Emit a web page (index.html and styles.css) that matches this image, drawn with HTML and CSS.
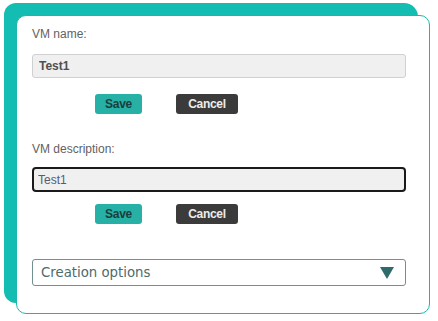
FILE: index.html
```html
<!DOCTYPE html>
<html lang="en">
<head>
    <meta charset="UTF-8">
    <title>VM settings</title>
    <link rel="stylesheet" href="styles.css">
</head>
<body>
    <div class="backdrop">
        <div class="card">
            <label class="field-label">VM name:</label>
            <input type="text" class="field name-field" value="Test1">
            <div class="actions first-actions">
                <button class="btn save">Save</button>
                <button class="btn cancel">Cancel</button>
            </div>

            <label class="field-label desc-label">VM description:</label>
            <input type="text" class="field desc-field" value="Test1">
            <div class="actions second-actions">
                <button class="btn save">Save</button>
                <button class="btn cancel">Cancel</button>
            </div>

            <div class="select-box">
                <span>Creation options</span>
                <svg class="arrow" width="14" height="12" viewBox="0 0 14 12">
                    <polygon points="0,0 14,0 7,12" fill="#2e6b6a"/>
                </svg>
            </div>
        </div>
    </div>
</body>
</html>
```

FILE: styles.css
```css
* {
    box-sizing: border-box;
    margin: 0;
    padding: 0;
}

html, body {
    height: 100%;
}

body {
    background: #ffffff;
    font-family: 'Liberation Sans', Arial, sans-serif;
    padding: 3px 0 0 4px;
}

.backdrop {
    width: 414px;
    height: 300px;
    padding: 12px 0 0 12px;
    background: #13bdb1;
    border-radius: 12px 14px 4px 12px;
}

.card {
    width: 414px;
    height: 299px;
    background: #ffffff;
    border: 1px solid #1ab7ac;
    border-radius: 10px;
    padding: 11px 0 0 15px;
    display: flex;
    flex-direction: column;
    align-items: flex-start;
}

.field-label {
    font-size: 12px;
    line-height: 14px;
    color: #626262;
}

.field {
    width: 374px;
    background: #f0f0f0;
    font-family: 'Liberation Sans', Arial, sans-serif;
    font-size: 12px;
    outline: none;
}

.name-field {
    height: 24px;
    margin-top: 13px;
    border: 1px solid #d0d0d0;
    border-radius: 3px;
    padding: 0 6px;
    color: #4f4f4f;
    font-weight: bold;
}

.desc-field {
    height: 25px;
    margin-top: 11px;
    border: 2px solid #1a1a1a;
    border-radius: 4px;
    padding: 0 4px;
    color: #5a5a70;
}

.actions {
    display: flex;
    gap: 34px;
    padding-left: 63px;
}

.first-actions {
    margin-top: 16px;
}

.second-actions {
    margin-top: 12px;
}

.btn {
    height: 20px;
    border: none;
    border-radius: 3px;
    font-family: 'Liberation Sans', Arial, sans-serif;
    font-size: 12px;
    font-weight: bold;
    letter-spacing: -0.3px;
}

.save {
    width: 47px;
    background: #27b1a6;
    color: #173f3c;
}

.cancel {
    width: 62px;
    background: #3b3b3b;
    color: #ececec;
}

.desc-label {
    margin-top: 28px;
}

.select-box {
    width: 374px;
    height: 27px;
    margin-top: 35px;
    border: 1px solid #6f9190;
    border-radius: 3px;
    padding: 0 11px 0 8px;
    display: flex;
    align-items: center;
    justify-content: space-between;
    font-family: 'DejaVu Sans', Verdana, sans-serif;
    font-size: 13.3px;
    color: #4d6b6b;
}
```
